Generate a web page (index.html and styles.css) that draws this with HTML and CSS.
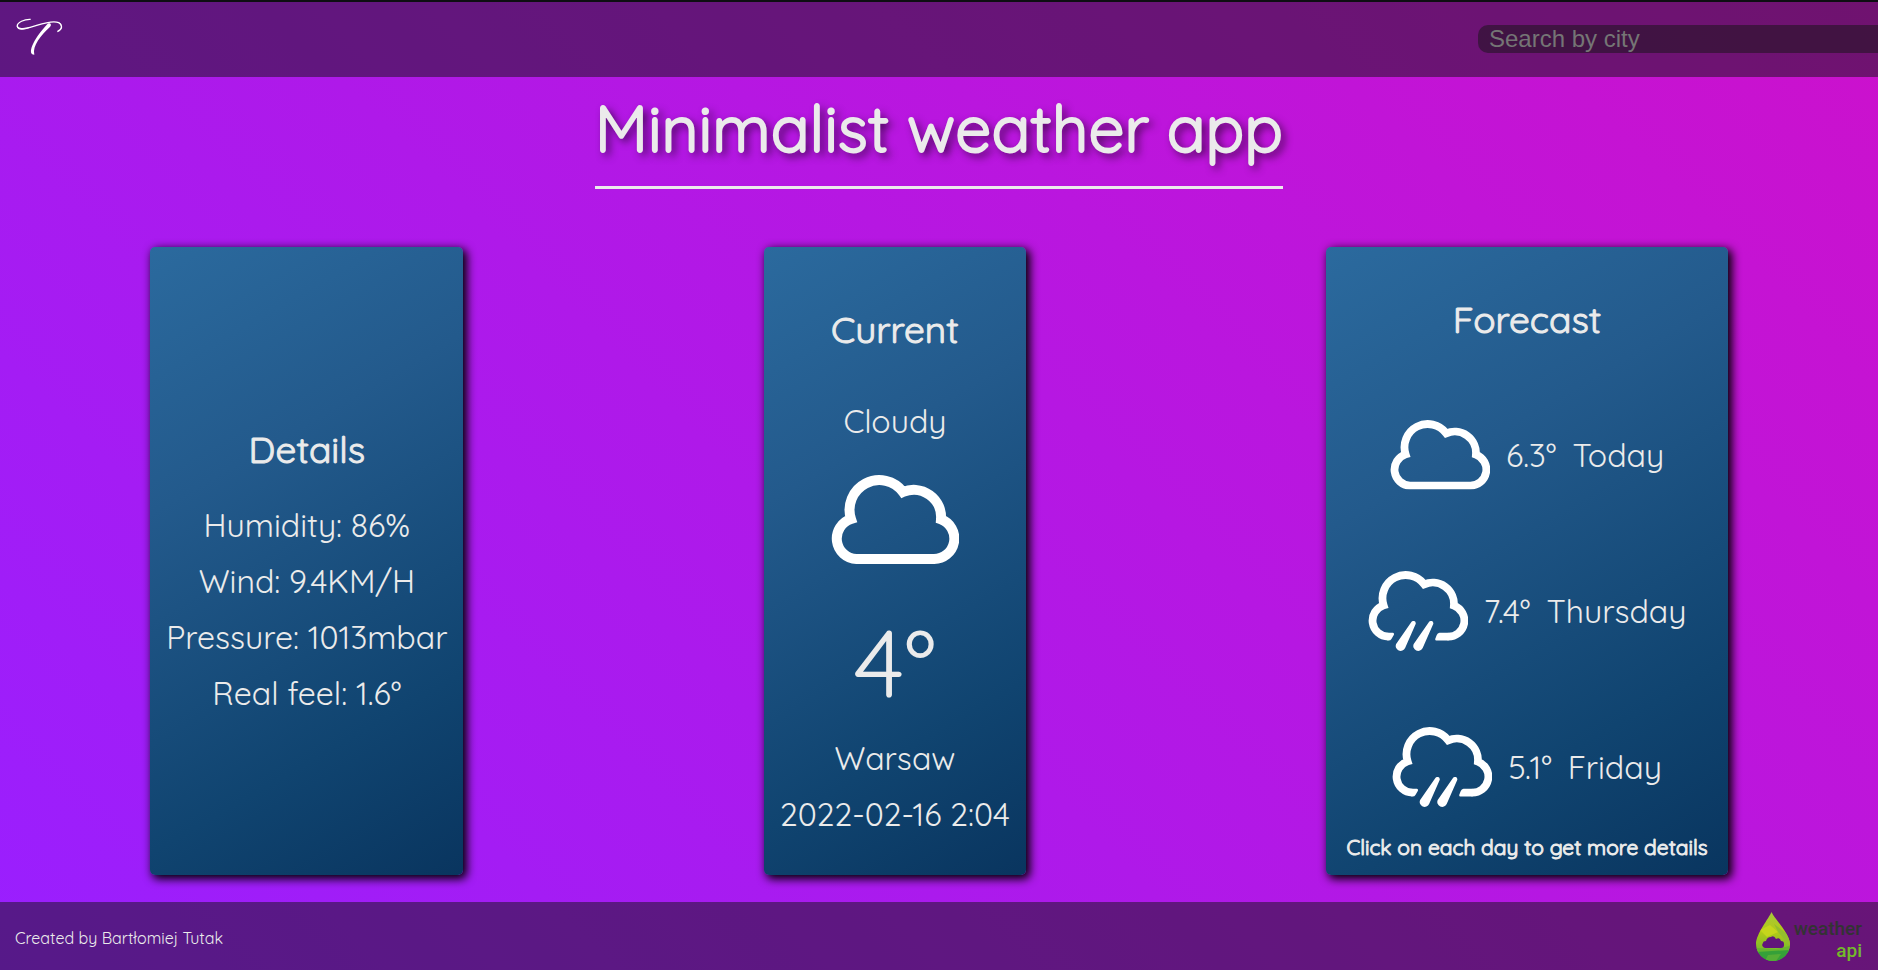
FILE: index.html
```html
<!DOCTYPE html>
<html lang="en">
<head>
<meta charset="utf-8">
<title>Minimalist weather app</title>
<meta name="viewport" content="width=device-width, initial-scale=1">
<link rel="stylesheet" href="styles.css">
</head>
<body>
<svg class="sprite" aria-hidden="true">
  <symbol id="cloud" viewBox="0 0 128 89">
    <path d="M25.5 84A20.5 20.5 0 0 1 20 44A29.7 29.7 0 0 1 72 17A27.4 27.4 0 0 1 110 44.3A20.5 20.5 0 0 1 102.5 84Z" fill="none" stroke="#fff" stroke-width="10"/>
  </symbol>
  <symbol id="rain" viewBox="0 0 128 103">
    <path d="M26 84A20.5 20.5 0 0 1 20 44A29.7 29.7 0 0 1 72 17A27.4 27.4 0 0 1 110 44.3A20.5 20.5 0 0 1 102 84" fill="none" stroke="#fff" stroke-width="10"/>
    <path d="M25 79H32Q34 79.8 33 82L30 87Q29 89 26 89H25ZM103 79H91.5Q89 79.500 88 82L86 87Q85.800 89 87.500 89H103ZM55.300 65.500A3.100 3.100 0 0 1 61 67.800L47.500 98.500A6.200 6.200 0 1 1 36 93.500ZM77.800 65.500A3.100 3.100 0 0 1 83.500 67.800L70 98.500A6.200 6.200 0 1 1 58.500 93.500Z" fill="#fff"/>
  </symbol>
</svg>

<header class="topbar">
  <a class="brand" href="#" aria-label="Home">
    <svg viewBox="48 54 141 114" width="47" height="38" aria-hidden="true">
      <path d="M92 58C75 57 49 67 52 80C55 92 89 83 110 76C132 69 162 61 176 68C188 75 188 88 172 95" fill="none" stroke="#fff" stroke-width="4"/>
      <path d="M54 76C52 88 72 87 94 81C72 94 48 90 51 77ZM143 71C151 67 157 75 149 82C124 105 96 138 103 164C80 164 98 119 143 71ZM172 66C186 68 188 80 183 88C184 77 182 71 172 66Z" fill="#fff"/>
    </svg>
  </a>
  <form class="search">
    <input class="search-input" type="text" placeholder="Search by city" aria-label="Search by city">
  </form>
</header>

<main class="content">
  <h1 class="title">Minimalist weather app</h1>
  <div class="cards">
    <section class="card details">
      <h2 class="heading">Details</h2>
      <p class="line">Humidity: 86%</p>
      <p class="line">Wind: 9.4KM/H</p>
      <p class="line">Pressure: 1013mbar</p>
      <p class="line">Real feel: 1.6°</p>
    </section>
    <section class="card current">
      <h2 class="heading">Current</h2>
      <p class="line">Cloudy</p>
      <svg class="icon-large" viewBox="0 0 128 89" aria-hidden="true"><use href="#cloud"/></svg>
      <p class="temperature">4°</p>
      <p class="line">Warsaw</p>
      <p class="line">2022-02-16 2:04</p>
    </section>
    <section class="card forecast">
      <h2 class="heading">Forecast</h2>
      <div class="days">
        <button class="day" type="button"><svg class="icon" viewBox="0 0 128 89" aria-hidden="true"><use href="#cloud"/></svg><span>6.3°</span><span>Today</span></button>
        <button class="day" type="button"><svg class="icon" viewBox="0 0 128 103" aria-hidden="true"><use href="#rain"/></svg><span>7.4°</span><span>Thursday</span></button>
        <button class="day" type="button"><svg class="icon" viewBox="0 0 128 103" aria-hidden="true"><use href="#rain"/></svg><span>5.1°</span><span>Friday</span></button>
      </div>
      <p class="note">Click on each day to get more details</p>
    </section>
  </div>
</main>

<footer class="footer">
  <p class="credit">Created by Bartłomiej Tutak</p>
  <a class="api" href="#">
    <svg class="drop" viewBox="0 0 34 49" width="34" height="49" aria-hidden="true">
      <defs>
        <linearGradient id="leaf" x1="0" y1="0" x2="0" y2="1">
          <stop offset="0" stop-color="#a5c63c"/><stop offset=".4" stop-color="#b4cb16"/><stop offset=".75" stop-color="#7fbb2c"/><stop offset="1" stop-color="#2f9e3c"/>
        </linearGradient>
        <clipPath id="drop-shape"><path d="M15.500 0C18 6 34 22 34 32A17 17 0 0 1 0 32C0 22 13 6 15.500 0Z"/></clipPath>
      </defs>
      <g clip-path="url(#drop-shape)">
        <path d="M0 0H34V49H0Z" fill="url(#leaf)"/>
        <path d="M4 18L14 13L22 20L11 25Z" fill="#c5d61c"/>
        <path d="M18 12L34 24V34L22 20Z" fill="#94be2d"/>
        <path d="M0 36L20 37L34 34V40L12 43L0 40Z" fill="#68b42f"/>
        <path d="M0 40L34 38V49H0Z" fill="#35a039"/>
        <path d="M12 43L25 42L20 49H9Z" fill="#55ad35"/>
      </g>
      <path d="M9 36A3 3 0 0 1 7 31Q7 29 10 29Q11 25 15 25Q18 23 20 27Q24 25 25 29Q28 29 28 32V33Q28 36 25 36Z" fill="#61157b"/>
    </svg>
    <span class="api-name"><span>weather</span><span class="api-suffix">api</span></span>
  </a>
</footer>
</body>
</html>
```
FILE: styles.css
```css
* {
  box-sizing: border-box;
  margin: 0;
  padding: 0;
}

body {
  display: flex;
  flex-direction: column;
  min-height: 100vh;
  overflow-x: hidden;
  border-top: 2px solid #0e0e12;
  background: linear-gradient(45deg, #991fff, #cc11cc) no-repeat;
  color: #ebebeb;
  font-family: Quicksand, Lato, sans-serif;
  font-size: 32px;
  line-height: 40px;
}

.sprite {
  position: absolute;
  width: 0;
  height: 0;
}

.topbar {
  display: flex;
  align-items: center;
  justify-content: space-between;
  min-height: 75px;
  padding: 0 0 2px 16px;
  background: rgba(20, 20, 20, 0.5);
}

.brand {
  padding-bottom: 4px;
}

.brand,
.brand svg {
  display: block;
}

.search-input {
  display: block;
  width: 400px;
  height: 28px;
  padding: 0 11px;
  border: 0;
  border-radius: 10px 0 0 10px;
  background: rgba(20, 20, 20, 0.5);
  color: #ebebeb;
  font: 24px "Liberation Sans", Arial, sans-serif;
}

.search-input::placeholder {
  color: #757575;
}

.content {
  display: flex;
  flex: 1;
  flex-direction: column;
  align-items: center;
  padding: 11px 0 27px;
}

.title {
  padding-bottom: 18px;
  border-bottom: 3px solid #ebebeb;
  font-size: 64px;
  font-weight: 400;
  line-height: 80px;
  text-shadow: 4px 4px 8px rgba(0, 0, 0, 0.8);
  -webkit-text-stroke: 2px #ebebeb;
}

.cards {
  display: flex;
  flex: 1;
  align-self: stretch;
  justify-content: space-around;
  margin-top: 58px;
}

.card {
  display: flex;
  flex-direction: column;
  align-items: center;
  padding: 16px;
  border-radius: 5px;
  background: linear-gradient(150deg, #2b6a9e, #235a8c 33%, #104470 75%, #09355f);
  box-shadow: 3px 3px 10px 1px #000;
  text-align: center;
}

.heading {
  font-size: 37px;
  font-weight: 400;
  line-height: 48px;
  -webkit-text-stroke: 1px #ebebeb;
}

.line {
  margin-top: 16px;
}

.details,
.current {
  justify-content: center;
  padding-top: 32px;
}

.details .heading {
  margin-bottom: 16px;
}

.current .heading {
  margin-bottom: 32px;
}

.icon-large {
  width: 128px;
  height: 89px;
  margin: 34px 0 38px;
}

.temperature {
  font-size: 96px;
  line-height: 120px;
}

.forecast {
  padding: 16px 20px;
}

.forecast .heading {
  margin: 32px 0;
}

.days {
  display: flex;
  flex-direction: column;
  align-items: center;
  gap: 28px;
  margin: auto 0 4px;
}

.day {
  display: flex;
  align-items: center;
  justify-content: center;
  gap: 16px;
  min-height: 128px;
  border: 0;
  background: none;
  color: inherit;
  font: inherit;
  cursor: pointer;
}

.icon {
  width: 100px;
}

.note {
  font-size: 21px;
  line-height: 24px;
  -webkit-text-stroke: 1px #ebebeb;
}

.footer {
  display: flex;
  align-items: center;
  justify-content: space-between;
  min-height: 68px;
  padding: 0 16px 0 15px;
  background: rgba(20, 20, 20, 0.5);
}

.credit {
  padding-top: 4px;
  font-size: 16px;
  line-height: 20px;
}

.api {
  display: flex;
  align-items: center;
  gap: 4px;
  color: #333;
  font: 500 19px/22px Roboto, sans-serif;
  text-decoration: none;
}

.api-name {
  display: flex;
  flex-direction: column;
  align-items: flex-end;
  padding-top: 8px;
}

.api-suffix {
  color: #73b92b;
}
```
